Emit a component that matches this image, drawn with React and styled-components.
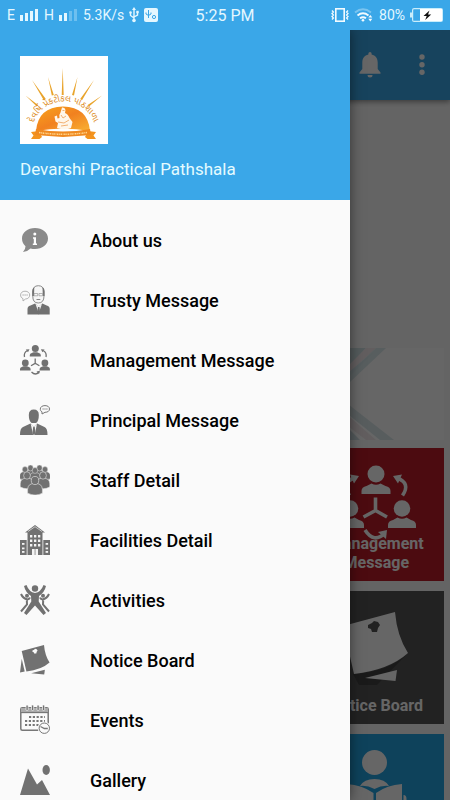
import React from "react";
import styled, { createGlobalStyle } from "styled-components";

const menuItems = [
  { label: "About us", icon: AboutIcon },
  { label: "Trusty Message", icon: TrustyIcon },
  { label: "Management Message", icon: ManagementMenuIcon },
  { label: "Principal Message", icon: PrincipalIcon },
  { label: "Staff Detail", icon: StaffIcon },
  { label: "Facilities Detail", icon: FacilitiesIcon },
  { label: "Activities", icon: ActivitiesIcon },
  { label: "Notice Board", icon: NoticeMenuIcon },
  { label: "Events", icon: EventsIcon },
  { label: "Gallery", icon: GalleryIcon },
];

export default function App() {
  return (
    <>
      <GlobalStyle />
      <Screen>
        <StatusBar>
          <StatusGroup>
            <span>E</span>
            <SignalIcon level={4} />
            <span>H</span>
            <SignalIcon level={2} />
            <span>5.3K/s</span>
            <UsbIcon />
            <DebugIcon />
          </StatusGroup>
          <Clock>5:25 PM</Clock>
          <StatusGroup $end>
            <VibrateIcon />
            <WifiIcon />
            <span>80%</span>
            <BatteryIcon />
          </StatusGroup>
        </StatusBar>

        <Body>
          <Home>
            <AppBar>
              <IconButton aria-label="Notifications">
                <BellIcon />
              </IconButton>
              <IconButton aria-label="More options">
                <MoreIcon />
              </IconButton>
            </AppBar>
            <Slider />
            <Banner>
              <BannerArt />
            </Banner>
            <Tiles>
              <Tile href="#management" $color="#bf1c28">
                <ManagementIcon width="84" height="78" />
                <TileLabel>Management Message</TileLabel>
              </Tile>
              <Tile href="#notice" $color="#555555">
                <NoticeIcon width="84" height="78" viewBox="-5 -5 84 78" pin="#555555" shadow />
                <TileLabel>Notice Board</TileLabel>
              </Tile>
              <Tile href="#homework" $color="#25a5e4" aria-label="Reading">
                <ReaderIcon />
              </Tile>
            </Tiles>
          </Home>
          <Scrim />
          <Drawer>
            <DrawerHeader>
              <Logo />
              <SchoolName>Devarshi Practical Pathshala</SchoolName>
            </DrawerHeader>
            <Menu>
              {menuItems.map(({ label, icon: Icon }) => (
                <li key={label}>
                  <MenuLink href="#">
                    <Icon />
                    {label}
                  </MenuLink>
                </li>
              ))}
            </Menu>
          </Drawer>
        </Body>
      </Screen>
    </>
  );
}

/* ---------- status bar icons ---------- */

function SignalIcon({ level }) {
  return (
    <svg width="19" height="14" viewBox="0 0 19 14" fill="#e4f7ff">
      {[0, 1, 2, 3].map((i) => (
        <rect key={i} x={i * 5} y={7 - i * 2} width="3" height={6 + i * 2} opacity={i < level ? 1 : 0.3} />
      ))}
    </svg>
  );
}

function UsbIcon() {
  return (
    <svg width="10" height="16" viewBox="0 0 10 16" fill="none" stroke="#e4f7ff" strokeWidth="1.4">
      <path d="M5 2v11M1.500 6v2.500L5 11M8.500 5v3L5 10" />
      <path d="M5 0l2 3H3z" fill="#e4f7ff" stroke="none" />
      <circle cx="5" cy="13.500" r="1.800" fill="#e4f7ff" stroke="none" />
      <circle cx="1.500" cy="5.500" r="1.300" fill="#e4f7ff" stroke="none" />
      <path d="M7.300 3.800h2.400v2.400H7.300z" fill="#e4f7ff" stroke="none" />
    </svg>
  );
}

function DebugIcon() {
  return (
    <svg width="14" height="14" viewBox="0 0 14 14">
      <rect width="14" height="14" rx="2" fill="#e4f7ff" />
      <path d="M4.500 2v8M2 4.500v1.500l2.500 1.500L7 6V4.500" fill="none" stroke="#3aa7e8" />
      <circle cx="10" cy="9" r="1.600" fill="none" stroke="#3aa7e8" />
    </svg>
  );
}

function VibrateIcon() {
  return (
    <svg width="18" height="14" viewBox="0 0 18 14" fill="none" stroke="#f2fbff" strokeWidth="1.300">
      <rect x="4.800" y="0.800" width="8.400" height="12.400" strokeWidth="1.600" />
      <path d="M1 2.500L2.400 4 1 5.500 2.400 7 1 8.500 2.400 10 1 11.500M17 2.500L15.600 4 17 5.500 15.600 7 17 8.500 15.600 10 17 11.500" />
    </svg>
  );
}

function WifiIcon() {
  return (
    <svg width="20" height="14" viewBox="0 0 20 14" fill="none" stroke="#f2fbff" strokeWidth="1.900">
      <path d="M1 4.500Q9 -2 17 4.500" opacity="0.350" />
      <path d="M3.500 7.500Q9 3 14.500 7.500M6 10.300Q9 8 12 10.300" />
      <circle cx="9" cy="12.300" r="1.300" fill="#f2fbff" stroke="none" />
      <path d="M14.300 9.500L16.300 7l2 2.500zM14.300 10.800l2 2.700 2-2.700z" fill="#f2fbff" stroke="none" />
    </svg>
  );
}

function BatteryIcon() {
  return (
    <svg width="33" height="14" viewBox="0 0 33 14">
      <rect x="0" y="4.500" width="2" height="5" fill="#c9edfb" />
      <rect x="2.600" y="0.600" width="29.800" height="12.800" rx="1.500" fill="none" stroke="#c9edfb" strokeWidth="1.200" />
      <rect x="10" y="1" width="22" height="12" fill="#fff" />
      <path d="M19.500 2.500L13.500 8h3.200l-1.500 4 6-5.500H18z" fill="#111" />
    </svg>
  );
}

/* ---------- home screen icons ---------- */

function BellIcon() {
  return (
    <svg width="22" height="26" viewBox="0 0 22 26" fill="#fff">
      <path d="M11 0a1.600 1.600 0 0 1 1.600 1.600v1C16.500 3.300 18.700 6.500 18.700 10.500v6.500L21.500 20.500v1.300H.5v-1.300L3.300 17v-6.500c0-4 2.200-7.200 6.100-7.900v-1A1.600 1.600 0 0 1 11 0z" />
      <path d="M8.500 23h5a2.500 2.500 0 0 1-5 0z" />
    </svg>
  );
}

function MoreIcon() {
  return (
    <svg width="6" height="22" viewBox="0 0 6 22" fill="#fff">
      <circle cx="3" cy="3" r="2.700" />
      <circle cx="3" cy="10.700" r="2.700" />
      <circle cx="3" cy="18.300" r="2.700" />
    </svg>
  );
}

function BannerArt() {
  return (
    <svg width="110" height="92" viewBox="0 0 110 92">
      <path d="M0 0H32L10 24H0z" fill="#cfe0e4" />
      <path d="M32 0H42L10 30V22z" fill="#f4ecee" />
      <path d="M42 0H52L16 34V24z" fill="#dcebed" />
      <path d="M40 4L16 28V38H10V28z" fill="#d6e6ea" />
      <path d="M10 53L60 92H46L10 63z" fill="#dbe9ec" />
      <path d="M10 64L42 92H32L10 75z" fill="#f4ecee" />
      <path d="M10 76L26 92H10z" fill="#d2e2e6" />
    </svg>
  );
}

function ManagementIcon(props) {
  return (
    <svg viewBox="0 0 84 78" fill="currentColor" {...props}>
      <circle cx="42" cy="10" r="8.500" />
      <path d="M27.500 30v-3q0-4 5-5l5-2.500q4.500 2.500 9 0l5 2.500q5 1 5 5v3z" />
      <circle cx="68" cy="44.500" r="8.300" />
      <path d="M54 64v-3q0-4 5-5l4.500-2.500q4.500 2.500 9 0L77 56q5 1 5 5v3z" />
      <circle cx="16" cy="44.500" r="8.300" />
      <path d="M2 64v-3q0-4 5-5l4.500-2.500q4.500 2.500 9 0L25 56q5 1 5 5v3z" />
      <g fill="none" stroke="currentColor" strokeWidth="3.600">
        <path d="M41.500 33.500V46.500L29.500 53M41.500 46.500L53 53" />
        <path d="M68.500 31.500Q77 19 63 14" />
        <path d="M15.500 31.500Q7 19 20 14" />
        <path d="M31 66Q40 80 51 69" />
      </g>
      <path d="M59 12l9-1.500-4 9zM25 12l-9-1.500 4 9zM53 66l-9 2 8 7z" />
    </svg>
  );
}

// same figure with fuller shapes, so that it reads at menu size
function ManagementMenuIcon() {
  return (
    <MenuSvg>
      <circle cx="15.300" cy="3.500" r="3.500" />
      <path d="M9.800 11.500V10q0-1.500 2-2l1.700-.7h3.600l1.700.7q2 .5 2 2v1.500z" />
      <circle cx="5.300" cy="18" r="3.400" />
      <path d="M0 25.500V24q0-1.500 1.800-2l1.700-.7h3.600l1.700.7q1.800.5 1.800 2v1.500z" />
      <circle cx="24.900" cy="18" r="3.400" />
      <path d="M19.600 25.500V24q0-1.500 1.800-2l1.700-.7h3.600l1.700.7q1.500.5 1.500 2v1.500z" />
      <g fill="none" stroke="currentColor" strokeWidth="1.300">
        <path d="M15.200 13.500v4.800L11 20.800M15.200 18.300l4.200 2.500" />
        <path d="M4.500 12Q3.500 7.500 7.500 5.500" />
        <path d="M26 12q1-4.500-3-6.500" />
        <path d="M11.500 27q4 4 7.500 0" />
      </g>
      <path d="M5.800 4.500l3.700-.2-1.500 3zM24.600 4.500l-3.700-.2 1.500 3zM20 25.800l-3.500.7 2.500 2.500z" />
    </MenuSvg>
  );
}

function NoticeIcon({ pin, shadow, ...props }) {
  return (
    <svg viewBox="0 0 70 70" fill="currentColor" {...props}>
      {shadow && <path d="M67 43L38 73H20L14 62Q48 60 67 43z" fill="#000" opacity="0.220" />}
      <path d="M4 14L56 0Q58 24 69 41Q50 58 15 62z" />
      <path d="M26 66L58 58L56.500 69z" />
      <path d="M4 32L11 62L0 64z" />
      <path d="M29 13l4-2 2-2 4 1 2 3-2 3-1 4h-5l-1-3-3-1z" fill={pin} />
    </svg>
  );
}

function ReaderIcon() {
  return (
    <svg width="84" height="78" viewBox="0 0 84 78" fill="currentColor">
      <circle cx="40.500" cy="12.500" r="12.500" />
      <path d="M26 36Q30 29 40.500 29T55 36Q48 35 40.500 39Q33 35 26 36z" />
      <path d="M39.500 43Q28 35 13 34V62Q28 64 39.500 71zM42 43Q53 35 68 34V62Q53 64 42 71z" />
      <path d="M69.500 45q3 0 3 4v10h-3zM11.500 45q-3 0-3 4v10h3z" />
    </svg>
  );
}

/* ---------- drawer icons ---------- */

function MenuSvg({ children, ...props }) {
  return (
    <svg width="30" height="30" viewBox="0 0 30 30" fill="currentColor" {...props}>
      {children}
    </svg>
  );
}

function AboutIcon() {
  return (
    <MenuSvg fill="#8a8a8a">
      <path d="M15 3C22.200 3 28 7.500 28 13.500S22.200 24 15 24q-2.500 0-4.500-.6Q7.500 26.500 3 27q2.500-2.500 2.500-5.800Q2 18 2 13.500C2 7.500 7.800 3 15 3z" />
      <circle cx="14.800" cy="9" r="1.500" fill="#fff" />
      <path d="M13 12.300h3v6.200h1v1.500h-4.200v-1.500h1v-4.700H13z" fill="#fff" />
    </MenuSvg>
  );
}

function TrustyIcon() {
  return (
    <MenuSvg>
      <path d="M12.800 7Q12.800.7 18.300.7T24 7v4q0 7-5.700 7T12.800 11z" fill="#f6f6f6" stroke="#8a8a8a" />
      <path d="M12.300 11V6q0-2.500 2-4l-.3 9zM24.500 11V6q0-2.500-2-4l.3 9z" />
      <path d="M14 8.500h3.700v2.300H14zM19 8.500h3.700v2.300H19z" fill="none" stroke="#999" strokeWidth="0.700" />
      <path d="M16.500 14.500h3.800" stroke="#888" />
      <path d="M7.500 29.500V24q0-3 3-3.600l4.500-1.900 3.700 3 3.700-3 4.300 1.900q3 .6 3 3.600v5.500z" />
      <path d="M15.500 19l3.200 9 3.300-9-3.300 2z" fill="#eee" />
      <path d="M18 22h1.500l.7 6-1.500 1.500L17.300 28z" />
      <path d="M5 6.200c2.800 0 4.700 1.600 4.700 3.800S8 14 5.500 14L3 16v-2.400C1.300 13 .6 11.600.6 10 .6 7.800 2.300 6.200 5 6.200z" fill="none" stroke="#aaa" strokeWidth="0.900" />
      <path d="M2.500 10h5.500" stroke="#999" strokeDasharray="1.200 0.800" />
    </MenuSvg>
  );
}

function PrincipalIcon() {
  return (
    <MenuSvg>
      <path d="M8.800 10q0-5.500 5-5.500t5 5.500q0 6.500-2.800 8h-4.400Q8.800 16 8.800 10z" />
      <path d="M0 30q0-7 3-8l7.500-3.500L13.800 22l3.300-3.500L24.500 22q3 1 3 8z" />
      <path d="M10.700 18.700L13 29.500h1.800l2.200-10.800-3.100 3z" fill="#f4f4f4" />
      <path d="M13.200 21.700h1.500l.8 6.500-1.600 1.500-1.500-1.500z" />
      <path d="M25 .6c2.800 0 4.500 1.400 4.500 3.400S27.800 7.300 25 7.300L22 9v-2.200C20.700 6.200 20.300 5 20.300 4c0-2 1.900-3.400 4.700-3.400z" fill="none" stroke="#777" />
      <path d="M22.500 4h5" stroke="#777" strokeDasharray="1.200 0.700" />
    </MenuSvg>
  );
}

function StaffIcon() {
  // back row first: x, y, scale
  const people = [
    [10.500, 3, 0.8],
    [19.500, 3, 0.8],
    [5, 4.500, 0.8],
    [25, 4.500, 0.8],
    [15, 5.500, 0.8],
    [7, 10.500, 1],
    [23, 10.500, 1],
    [15, 15.500, 1.100],
  ];
  return (
    <MenuSvg stroke="#e2e2e2" strokeWidth="0.600">
      {people.map(([x, y, s]) => (
        <g key={`${x}-${y}`} transform={`translate(${x} ${y}) scale(${s})`}>
          <path d="M-6.700 11.500q-.8-7.500 3.700-8.500l2-.5h2l2 .5q4.500 1 3.700 8.500-6.500 3.500-13.400 0z" />
          <ellipse rx="3.400" ry="3.700" />
        </g>
      ))}
    </MenuSvg>
  );
}

function FacilitiesIcon() {
  return (
    <MenuSvg>
      <path d="M15 0L25 7.500H22.500V30h-15V7.500H5z" />
      <path d="M0 15h6.700v15H0zM23.300 15H30v15h-6.700z" />
      <path d="M8 6.500L15 1.700l7 4.800" fill="none" stroke="#ddd" strokeWidth="0.800" />
      <g fill="#f4f4f4">
        {[10, 14, 18].map((x) =>
          [10, 14.500, 19].map((y) => <rect key={`${x}-${y}`} x={x} y={y} width="2.300" height="2.500" />)
        )}
        {[2, 25.600].map((x) =>
          [18, 22.500, 26].map((y) => <rect key={`${x}-${y}`} x={x} y={y} width="2.500" height="1.800" />)
        )}
        <path d="M12 24h2.700v6H12zM15.400 24H18v6h-2.600z" />
      </g>
    </MenuSvg>
  );
}

function ActivitiesIcon() {
  return (
    <MenuSvg>
      <circle cx="15" cy="3.500" r="3.200" />
      <path d="M4 1L6.500 0Q9 7 15 8q6-1 8.500-8L26 1q-1.500 6.500-7 10l-.3 5.500L26 28l-2.500 2L15 20.500 6.500 30 4 28l7.300-11.500L11 11Q5.500 7.500 4 1z" />
      <circle cx="7" cy="10.700" r="2" />
      <circle cx="23" cy="10.700" r="2" />
      <path
        d="M1 9Q3 13.500 7.500 14.500q2-.3 2.500-2M6.800 14.500l.2 5L1 26.500M29 9q-2 4.500-6.500 5.500-2-.3-2.500-2M23.200 14.500l-.2 5 6 7"
        fill="none"
        stroke="currentColor"
        strokeWidth="2"
      />
    </MenuSvg>
  );
}

function NoticeMenuIcon() {
  return <NoticeIcon width="30" height="30" pin="#fafafa" />;
}

function EventsIcon() {
  return (
    <MenuSvg>
      <rect x="0.800" y="2.700" width="27.400" height="22.500" rx="1.500" fill="none" stroke="#777" strokeWidth="1.500" />
      <path d="M1 7.500h27" stroke="#777" strokeWidth="1.300" />
      <path d="M1 3h27v4H1z" fill="#aaa" />
      {[6, 11.500, 17, 22.500].map((x) => (
        <rect key={x} x={x} y="0" width="2.200" height="5.500" rx="1" stroke="#fafafa" strokeWidth="0.700" />
      ))}
      {[12, 16, 20].map((y) => (
        <path key={y} d={`M${y === 12 ? 9 : 5} ${y}H25`} stroke="#777" strokeWidth="2" strokeDasharray="2.200 1.600" />
      ))}
      <circle cx="24.300" cy="23.200" r="6.500" fill="#fafafa" />
      <circle cx="24.300" cy="23.200" r="5.200" fill="#fafafa" stroke="#777" />
      <path d="M20.500 21.500l3.800 2h3.500" fill="none" stroke="#777" strokeWidth="1.300" />
    </MenuSvg>
  );
}

function GalleryIcon() {
  return (
    <MenuSvg>
      <ellipse cx="26.200" cy="5" rx="3.700" ry="5" />
      <path d="M0 30L8 3.500L17 19.500L22 15L30 30z" />
    </MenuSvg>
  );
}

function Logo() {
  return (
    <LogoSvg viewBox="0 0 88 88" role="img" aria-label="School logo">
      <defs>
        <linearGradient id="sun" x1="0" y1="0" x2="1" y2="1">
          <stop offset="0" stopColor="#f8a51c" />
          <stop offset="0.500" stopColor="#f18120" />
          <stop offset="1" stopColor="#f9b233" />
        </linearGradient>
        <path id="nameArc" d="M13.500 67A32 32 0 0 1 74 67" />
      </defs>
      <g fill="#e9a42c">
        <path d="M42.700 12l1 27h-2zM28 21l5.800 18-2 .5zM57.500 21l-3.500 18.500-2-.5zM12 24l13.800 19-2 1.300zM74 24L62 44.300 60.200 43zM5.500 39.500L18 49l-1.200 1.500zM82 39.500L69 50.500 67.700 49z" />
      </g>
      <text fill="#dd8c25" fontSize="9" fontFamily="'Noto Sans Gujarati', 'Noto Sans', sans-serif">
        <textPath href="#nameArc" startOffset="50%" textAnchor="middle">
          દેવર્ષિ પ્રેક્ટીકલ પાઠશાળા
        </textPath>
      </text>
      <path d="M16 75Q18 51 43 50.500Q68 51 70 75Q43 70 16 75z" fill="url(#sun)" />
      <path
        d="M42 51.500q3-.5 3.500 2.500l-.5 3q3 1 4.500 5l3 4-1.500 6q-6 2.500-14 0l1-5-2.500-1.500-1-5 2.500-1 .5 3 2-.5q-.5-4 1-5.500z"
        fill="#fff6ea"
      />
      <path d="M41 59l2 3 3-2M38 66l6 1 5-3M41 70l7-1M42.500 54.500h2" fill="none" stroke="#ec9340" strokeWidth="0.700" />
      <path d="M11 76l8-1 3 6-2.500 2H11l2.500-3.500zM76 76l-8-1-3 6 2.500 2H76l-2.500-3.500z" fill="#f3941f" />
      <path d="M16 73Q43 78 70 73L71 79Q58 80 43 81Q28 80 15 79z" fill="#f08a20" />
      <path d="M19 76.500Q43 80 67 76.500" fill="none" stroke="#ffd58e" strokeWidth="1.500" strokeDasharray="1.500 0.700 0.800 0.600" />
    </LogoSvg>
  );
}

/* ---------- styles ---------- */

const GlobalStyle = createGlobalStyle`
  * {
    box-sizing: border-box;
  }
  body {
    margin: 0;
    font-family: Roboto, "Liberation Sans", sans-serif;
  }
  svg {
    display: block;
    flex-shrink: 0;
  }
`;

const Screen = styled.div`
  height: 100vh;
  display: flex;
  flex-direction: column;
  overflow: hidden;
  background: #fafafa;
`;

const StatusBar = styled.div`
  height: 30px;
  flex-shrink: 0;
  display: flex;
  align-items: center;
  padding: 0 7px;
  background: #3aa7e8;
  color: #e4f7ff;
  font-size: 14px;
`;

const StatusGroup = styled.div`
  flex: 1;
  display: flex;
  align-items: center;
  justify-content: ${({ $end }) => ($end ? "flex-end" : "flex-start")};
  gap: 5px;
`;

const Clock = styled.span`
  font-size: 16px;
`;

const Body = styled.div`
  position: relative;
  flex: 1;
  min-height: 0;
  overflow: hidden;
`;

const Home = styled.main`
  display: flex;
  flex-direction: column;
`;

const AppBar = styled.header`
  height: 70px;
  display: flex;
  align-items: center;
  justify-content: flex-end;
  gap: 12px;
  padding-right: 8px;
  background: #3aa7e8;
  box-shadow: 0 2px 5px rgba(0, 0, 0, 0.4);
`;

const IconButton = styled.button`
  width: 40px;
  height: 40px;
  display: flex;
  align-items: center;
  justify-content: center;
  padding: 0;
  border: none;
  background: none;
  cursor: pointer;
`;

const Slider = styled.div`
  height: 248px;
`;

const Banner = styled.div`
  height: 92px;
  margin: 0 6px;
  display: flex;
  justify-content: flex-end;
  background: #fff;
`;

const Tiles = styled.div`
  display: grid;
  grid-template-columns: repeat(3, 1fr);
  gap: 10px 16px;
  padding: 8px 6px;
`;

const Tile = styled.a`
  grid-column: 3;
  height: 133px;
  display: grid;
  justify-items: center;
  padding: 16px 0 9px;
  background: ${({ $color }) => $color};
  color: #fff;
  text-decoration: none;

  > * {
    grid-area: 1 / 1;
  }
`;

const TileLabel = styled.span`
  align-self: end;
  font-size: 16px;
  font-weight: 700;
  line-height: 19px;
  text-align: center;
`;

const Scrim = styled.div`
  position: absolute;
  inset: 0;
  background: rgba(0, 0, 0, 0.6);
`;

const Drawer = styled.aside`
  position: absolute;
  top: 0;
  bottom: 0;
  left: 0;
  width: calc(100% - 100px);
  max-width: 400px;
  overflow: hidden;
  background: #fafafa;
  box-shadow: 0 0 12px rgba(0, 0, 0, 0.5);
`;

const DrawerHeader = styled.div`
  height: 170px;
  display: flex;
  flex-direction: column;
  gap: 14px;
  padding: 26px 20px 0;
  background: #3aa7e8;
`;

const LogoSvg = styled.svg`
  width: 88px;
  height: 88px;
  background: #fff;
`;

const SchoolName = styled.span`
  color: #e4fbff;
  font-size: 17px;
  line-height: 22px;
`;

const Menu = styled.ul`
  margin: 0;
  padding: 10px 0 0;
  list-style: none;
`;

const MenuLink = styled.a`
  height: 60px;
  display: flex;
  align-items: center;
  gap: 40px;
  padding: 0 20px;
  color: #000;
  font-size: 18px;
  font-weight: 500;
  text-decoration: none;

  svg {
    color: #717171;
  }
`;
